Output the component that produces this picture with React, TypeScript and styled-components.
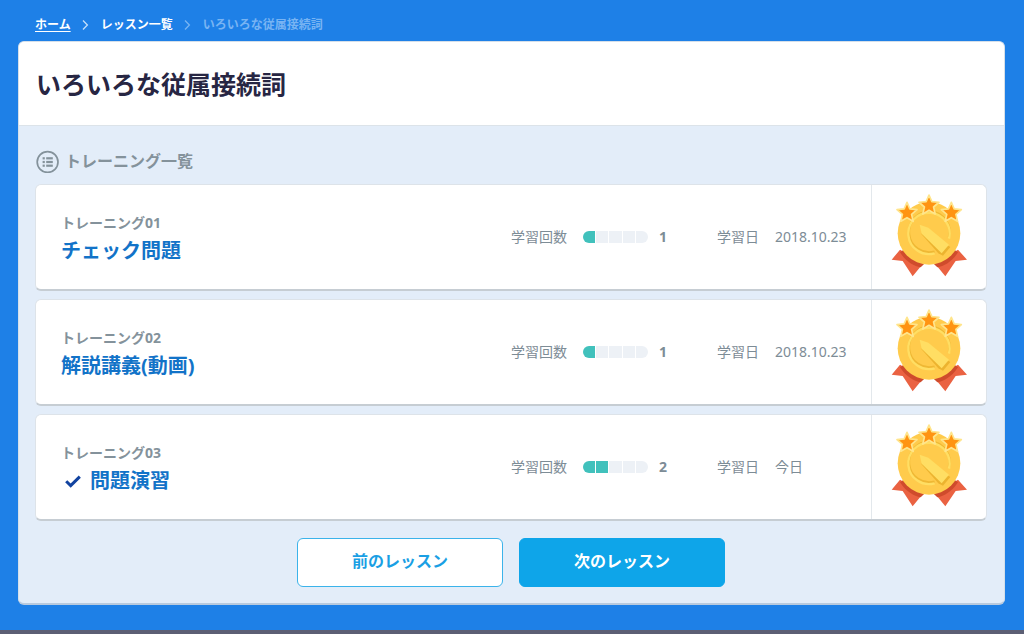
import React from "react";
import styled, { createGlobalStyle } from "styled-components";

const GlobalStyle = createGlobalStyle`
  *, *::before, *::after { box-sizing: border-box; }
  body {
    margin: 0;
    background: #1e80e7;
    color: #7d8c96;
    font-family: "Noto Sans", "Noto Sans CJK JP", sans-serif;
  }
`;

const Page = styled.div`
  min-height: 100vh;
  display: flex;
  flex-direction: column;
`;

const Main = styled.main`
  flex: 1;
  padding: 17px 19px 25px 18px;
`;

const Breadcrumb = styled.nav`
  display: flex;
  align-items: center;
  gap: 10px;
  height: 16px;
  margin: 0 0 8px 17px;
  font-size: 12px;
  line-height: 16px;
  font-weight: 700;
  color: #ffffff;
`;

const CrumbLink = styled.a<{ $underlined?: boolean }>`
  color: #ffffff;
  text-decoration: ${(p) => (p.$underlined ? "underline" : "none")};
  text-underline-offset: 2px;
`;

const CrumbCurrent = styled.span`
  color: #78b4f3;
`;

const Panel = styled.article`
  background: #e3edf9;
  border: 1px solid #d5dfe9;
  border-bottom: 2px solid #b9cade;
  border-radius: 6px;
  overflow: hidden;
`;

const PanelHeader = styled.header`
  padding: 24px 17px 23px;
  background: #ffffff;
  border-bottom: 1px solid #dce3e9;
`;

const Title = styled.h1`
  margin: 0;
  font-size: 25px;
  line-height: 36px;
  font-weight: 700;
  color: #272643;
`;

const PanelBody = styled.div`
  padding: 23px 17px 16px 16px;
`;

const SectionTitle = styled.h2`
  display: flex;
  align-items: center;
  gap: 6px;
  height: 24px;
  margin: 0 0 11px;
  font-size: 16px;
  line-height: 24px;
  font-weight: 700;
  color: #84929b;
`;

const List = styled.ul`
  list-style: none;
  margin: 0;
  padding: 0;
  display: flex;
  flex-direction: column;
  gap: 8px;
`;

const Card = styled.li`
  display: grid;
  grid-template-columns: minmax(0, 1fr) 206px 154px 115px;
  align-items: center;
  height: 107px;
  background: #ffffff;
  border: 1px solid #dde3e9;
  border-bottom: 2px solid #c6cdd3;
  border-radius: 6px;
`;

const Info = styled.div`
  padding: 4px 0 0 25px;
`;

const Label = styled.div`
  font-size: 14px;
  line-height: 22px;
  font-weight: 700;
  color: #84929b;
`;

const Name = styled.a`
  display: flex;
  align-items: center;
  gap: 8px;
  font-size: 20px;
  line-height: 33px;
  font-weight: 700;
  color: #1273c8;
  text-decoration: none;
`;

const Stat = styled.div`
  display: flex;
  align-items: center;
  gap: 16px;
  font-size: 14px;
  line-height: 20px;
`;

const StatCount = styled.span`
  font-weight: 700;
  margin-left: -5px;
`;

const Meter = styled.div`
  display: flex;
  gap: 1px;
  width: 65px;
  height: 12px;
  border-radius: 6px;
  overflow: hidden;
`;

const Segment = styled.span<{ $on: boolean }>`
  flex: 1;
  background: ${(p) => (p.$on ? "#41c1bc" : "#edf1f6")};
`;

const Award = styled.div`
  display: flex;
  justify-content: center;
  align-self: stretch;
  align-items: center;
  padding: 0 0 2px 2px;
  border-left: 1px solid #e3e8ec;
`;

const Actions = styled.div`
  display: flex;
  justify-content: center;
  gap: 16px;
  margin-top: 17px;
`;

const LessonButton = styled.button<{ $primary?: boolean }>`
  width: 206px;
  height: 49px;
  padding: 0 0 6px;
  border: 1px solid ${(p) => (p.$primary ? "#0ea5e9" : "#3bb3ea")};
  border-radius: 6px;
  background: ${(p) => (p.$primary ? "#0ea5e9" : "#ffffff")};
  color: ${(p) => (p.$primary ? "#ffffff" : "#1a9fe4")};
  font-family: inherit;
  font-size: 16px;
  font-weight: 700;
  cursor: pointer;
`;

const FooterEdge = styled.footer`
  height: 4px;
  background: #5c5f74;
`;

const Chevron = ({ color }: { color: string }) => (
  <svg width="10" height="12" viewBox="0 0 10 12" fill="none" stroke={color} strokeWidth="1.3" aria-hidden="true">
    <path d="M2 1.5 6.4 6 2 10.5" />
  </svg>
);

const ListIcon = () => (
  <svg width="24" height="24" viewBox="0 0 24 24" aria-hidden="true">
    <circle cx="12.6" cy="13" r="10.4" fill="none" stroke="#84929b" strokeWidth="1.7" />
    <g fill="#84929b">
      <rect x="7.6" y="8.2" width="2.2" height="2.2" />
      <rect x="7.6" y="11.9" width="2.2" height="2.2" />
      <rect x="7.6" y="15.6" width="2.2" height="2.2" />
      <rect x="11.2" y="8.2" width="6.6" height="2.2" />
      <rect x="11.2" y="11.9" width="6.6" height="2.2" />
      <rect x="11.2" y="15.6" width="6.6" height="2.2" />
    </g>
  </svg>
);

const CheckIcon = () => (
  <svg width="21" height="20" viewBox="0 0 21 20" fill="none" stroke="#1243a0" strokeWidth="3" aria-hidden="true">
    <path d="M5.2 11.2 9.7 15.6 18.8 6.6" />
  </svg>
);

const STAR = "M0-24 6.8-8.2 24-6.6 11 4.8 14.8 21.6 0 12.8-14.8 21.6-11 4.8-24-6.6-6.8-8.2Z";

const Medal = () => (
  <svg width="80" height="90" viewBox="0 0 240 270" role="img" aria-label="金メダル">
    <path d="M30 176 5 206 38 210 68 256 100 217Z" fill="#ea6242" />
    <path d="M204 176 231 206 197 210 166 256 134 217Z" fill="#ea6242" />
    <path d="M30 184C48 212 72 226 92 229L108 214 50 170Z" fill="#cf4b2c" />
    <path d="M204 184C186 212 162 226 142 229L126 214 184 170Z" fill="#cf4b2c" />
    <circle cx="117" cy="127" r="94" fill="#ffcb4c" />
    <path
      d="M134 187A61 61 0 1 1 177 143"
      fill="none"
      stroke="#efb834"
      strokeWidth="7"
      transform="translate(0 -5)"
    />
    <path d="M134 187A62 62 0 1 1 177 143" fill="none" stroke="#ffde63" strokeWidth="7" />
    <path d="M92 127 145 187 159 194 181 168 170 161Z" fill="#ecb32f" />
    <path d="M89 101 115 110 177 161 155 187 95 128Z" fill="#ffde63" />
    <g fill="#ff9412" stroke="#ffe58c" strokeWidth="4" strokeLinejoin="round">
      <path d={STAR} transform="translate(51 64) scale(1.25)" />
      <path d={STAR} transform="translate(184 64) scale(1.25)" />
      <path d={STAR} transform="translate(117 42) scale(1.25)" />
    </g>
  </svg>
);

interface Training {
  label: string;
  name: string;
  count: number;
  date: string;
  checked?: boolean;
}

const trainings: Training[] = [
  { label: "トレーニング01", name: "チェック問題", count: 1, date: "2018.10.23" },
  { label: "トレーニング02", name: "解説講義(動画)", count: 1, date: "2018.10.23" },
  { label: "トレーニング03", name: "問題演習", count: 2, date: "今日", checked: true },
];

const TrainingCard = ({ training }: { training: Training }) => (
  <Card>
    <Info>
      <Label>{training.label}</Label>
      <Name href="#">
        {training.checked && <CheckIcon />}
        {training.name}
      </Name>
    </Info>
    <Stat>
      <span>学習回数</span>
      <Meter>
        {[0, 1, 2, 3, 4].map((i) => (
          <Segment key={i} $on={i < training.count} />
        ))}
      </Meter>
      <StatCount>{training.count}</StatCount>
    </Stat>
    <Stat>
      <span>学習日</span>
      <span>{training.date}</span>
    </Stat>
    <Award>
      <Medal />
    </Award>
  </Card>
);

export default function App() {
  return (
    <Page>
      <GlobalStyle />
      <Main>
        <Breadcrumb aria-label="パンくずリスト">
          <CrumbLink href="#" $underlined>
            ホーム
          </CrumbLink>
          <Chevron color="#c5dffa" />
          <CrumbLink href="#">レッスン一覧</CrumbLink>
          <Chevron color="#78b4f3" />
          <CrumbCurrent aria-current="page">いろいろな従属接続詞</CrumbCurrent>
        </Breadcrumb>
        <Panel>
          <PanelHeader>
            <Title>いろいろな従属接続詞</Title>
          </PanelHeader>
          <PanelBody>
            <SectionTitle>
              <ListIcon />
              トレーニング一覧
            </SectionTitle>
            <List>
              {trainings.map((t) => (
                <TrainingCard key={t.label} training={t} />
              ))}
            </List>
            <Actions>
              <LessonButton type="button">前のレッスン</LessonButton>
              <LessonButton type="button" $primary>
                次のレッスン
              </LessonButton>
            </Actions>
          </PanelBody>
        </Panel>
      </Main>
      <FooterEdge />
    </Page>
  );
}
